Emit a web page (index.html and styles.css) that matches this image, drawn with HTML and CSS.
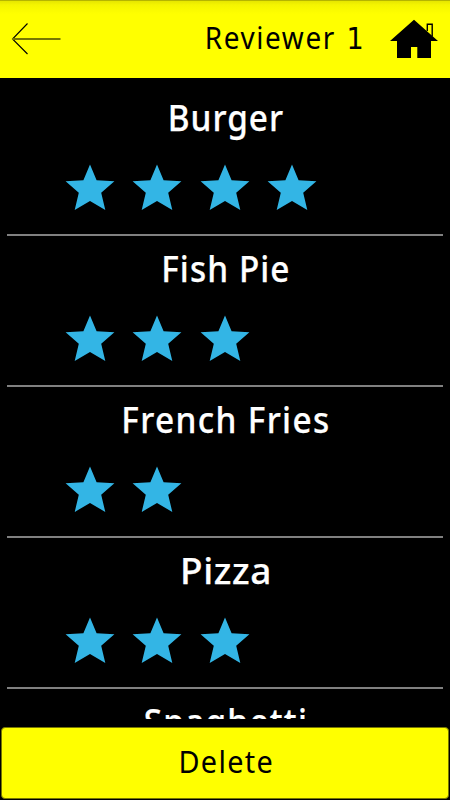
FILE: index.html
```
<!DOCTYPE html>
<html lang="en">
<head>
<meta charset="utf-8">
<title>Reviewer 1</title>
<link rel="stylesheet" href="styles.css">
</head>
<body>
<svg width="0" height="0" class="defs"><symbol id="star" viewBox="0 0 50 48"><path d="M25 .5 31.6 16.2 49.4 17.2 36.2 28.8 40.3 46 25 36.9 9.7 46 13.8 28.8.6 17.2 18.4 16.2Z"/></symbol></svg>
<div class="app">
<header class="bar">
<svg class="back" width="54" height="36" viewBox="0 0 54 36"><path d="M19.5 2.5 4.5 18 19.5 33" fill="none" stroke="#000" stroke-width="1.1"/><path d="M4 18H52.5" stroke="#777700" stroke-width="2"/></svg>
<h1 class="title">Reviewer <span class="digit">1</span></h1>
<svg class="home" width="50" height="40" viewBox="0 0 50 40"><path d="M25 .7 49 22H42V39H28.3V28H22V39H8V22H1Z"/><path d="M38.3 12V5.2H43.2V17.5" fill="none" stroke="#000" stroke-width="1.4"/></svg>
</header>
<main class="list">
<section class="row"><h2 class="name burger">Burger</h2><div class="stars"><svg><use href="#star"/></svg><svg><use href="#star"/></svg><svg><use href="#star"/></svg><svg><use href="#star"/></svg></div></section>
<section class="row"><h2 class="name fish">Fish Pie</h2><div class="stars"><svg><use href="#star"/></svg><svg><use href="#star"/></svg><svg><use href="#star"/></svg></div></section>
<section class="row"><h2 class="name fries">French Fries</h2><div class="stars"><svg><use href="#star"/></svg><svg><use href="#star"/></svg></div></section>
<section class="row"><h2 class="name pizza">Pizza</h2><div class="stars"><svg><use href="#star"/></svg><svg><use href="#star"/></svg><svg><use href="#star"/></svg></div></section>
<section class="row"><h2 class="name spaghetti">Spaghetti</h2></section>
</main>
<button class="delete"><span class="label">Delete</span></button>
</div>
</body>
</html>
```
FILE: styles.css
```
* { box-sizing: border-box; }
body { margin: 0; background: #000; font-family: "Noto Sans", sans-serif; }
.defs { display: block; }
.defs, .app { overflow: hidden; }
.app { height: 800px; display: flex; flex-direction: column; }
.bar {
  height: 78px; flex: none; display: flex; align-items: flex-start;
  padding: 0 11px 0 8px;
  background: linear-gradient(#b5b500 0, #b5b500 1px, #e6e600 1px, #f5f500 5px, #ff0 14px);
}
.back { margin-top: 21px; }
.title {
  margin: 16px 25px 0 auto; font-size: 31px; line-height: 42px; font-weight: 400;
  letter-spacing: 1.8px; white-space: nowrap; transform: scaleX(.9); transform-origin: right;
}
.digit { margin-left: 2px; font-family: "DejaVu Sans", sans-serif; font-size: 30px; line-height: 1; letter-spacing: 0; }
.home { margin-top: 19px; }
.list { height: 641px; flex: none; overflow: hidden; padding: 7.4px 7px 0; }
.row { height: 150.8px; border-bottom: 2px solid #808080; }
.name {
  margin: 0; padding: 7px 0 0 2px; font-size: 37px; line-height: 50px; font-weight: 500;
  color: #fff; text-align: center; white-space: nowrap; transform: scaleX(.9);
  -webkit-text-stroke: .25px #fff;
}
.burger { letter-spacing: 1.1px; }
.fish { letter-spacing: 1.2px; }
.fries { letter-spacing: 1.5px; }
.pizza { letter-spacing: .6px; transform: none; }
.spaghetti { letter-spacing: 1.4px; }
.stars { display: flex; gap: 17.6px; padding: 22px 0 0 57.7px; }
.stars svg { width: 50px; height: 48px; fill: #33b5e5; }
.delete {
  margin: 8px 1px 1px; height: 72px; flex: none; padding: 0 0 4px;
  border: 1px solid #777700; border-radius: 4px; background: #ff0; color: #000;
  font: 400 31px "Noto Sans", sans-serif; letter-spacing: 1.4px;
}
.label { display: inline-block; padding-left: 2px; transform: scaleX(.93); }
```
